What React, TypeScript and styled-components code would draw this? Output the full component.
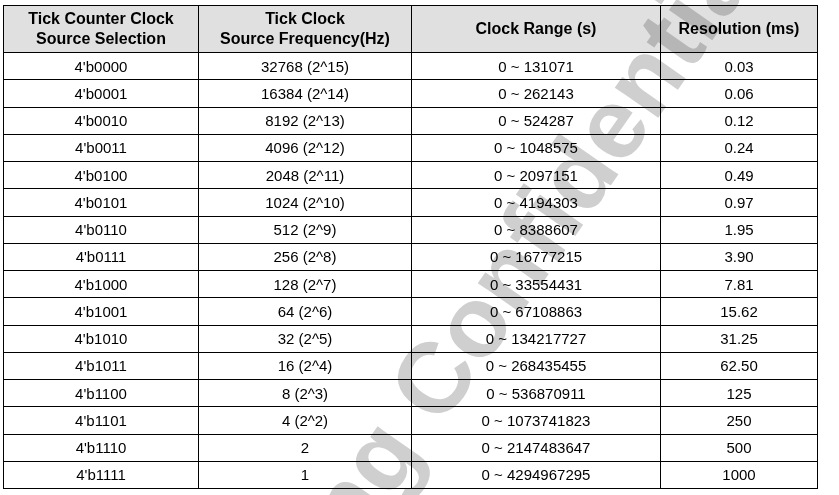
import React from 'react';
import styled, { createGlobalStyle } from 'styled-components';

const GlobalStyle = createGlobalStyle`
html, body {
margin: 0;
padding: 0;
background: #ffffff;
}
body {
font-family: "Liberation Sans", Arial, sans-serif;
color: #000000;
}
`;

const Page = styled.div`
position: relative;
width: 839px;
height: 495px;
overflow: hidden;
padding: 5px 0 0 3px;
box-sizing: border-box;
`;

const Grid = styled.div`
display: grid;
grid-template-columns: 195px 213px 249px 157px;
grid-template-rows: 47px repeat(16, 27.25px);
width: 815px;
border-top: 1px solid #000;
border-left: 1px solid #000;
box-sizing: border-box;
`;

const HeadCell = styled.div`
display: flex;
align-items: center;
justify-content: center;
text-align: center;
background: #e0e0e0;
border-right: 1px solid #000;
border-bottom: 1px solid #000;
font-size: 16px;
font-weight: 700;
line-height: 20px;
`;

const Cell = styled.div`
display: flex;
align-items: center;
justify-content: center;
border-right: 1px solid #000;
border-bottom: 1px solid #000;
font-size: 15px;
line-height: 1;
`;

const Watermark = styled.span`
position: absolute;
left: 97px;
top: 771px;
transform-origin: 0 0;
transform: rotate(-55deg);
font-family: "Liberation Sans", Arial, sans-serif;
font-weight: 700;
font-size: 100px;
line-height: 100px;
white-space: nowrap;
color: #cfcfcf;
mix-blend-mode: multiply;
pointer-events: none;
`;

interface IRow {
    sel: string;
    freq: string;
    range: string;
    res: string;
}

const rows: IRow[] = [
    { sel: "4'b0000", freq: '32768 (2^15)', range: '0 ~ 131071', res: '0.03' },
    { sel: "4'b0001", freq: '16384 (2^14)', range: '0 ~ 262143', res: '0.06' },
    { sel: "4'b0010", freq: '8192 (2^13)', range: '0 ~ 524287', res: '0.12' },
    { sel: "4'b0011", freq: '4096 (2^12)', range: '0 ~ 1048575', res: '0.24' },
    { sel: "4'b0100", freq: '2048 (2^11)', range: '0 ~ 2097151', res: '0.49' },
    { sel: "4'b0101", freq: '1024 (2^10)', range: '0 ~ 4194303', res: '0.97' },
    { sel: "4'b0110", freq: '512 (2^9)', range: '0 ~ 8388607', res: '1.95' },
    { sel: "4'b0111", freq: '256 (2^8)', range: '0 ~ 16777215', res: '3.90' },
    { sel: "4'b1000", freq: '128 (2^7)', range: '0 ~ 33554431', res: '7.81' },
    { sel: "4'b1001", freq: '64 (2^6)', range: '0 ~ 67108863', res: '15.62' },
    { sel: "4'b1010", freq: '32 (2^5)', range: '0 ~ 134217727', res: '31.25' },
    { sel: "4'b1011", freq: '16 (2^4)', range: '0 ~ 268435455', res: '62.50' },
    { sel: "4'b1100", freq: '8 (2^3)', range: '0 ~ 536870911', res: '125' },
    { sel: "4'b1101", freq: '4 (2^2)', range: '0 ~ 1073741823', res: '250' },
    { sel: "4'b1110", freq: '2', range: '0 ~ 2147483647', res: '500' },
    { sel: "4'b1111", freq: '1', range: '0 ~ 4294967295', res: '1000' },
];

const App: React.FC = () => {
    return (
        <>
            <GlobalStyle />
            <Page>
                <Grid>
                    <HeadCell>
                        Tick Counter Clock
                        <br />
                        Source Selection
                    </HeadCell>
                    <HeadCell>
                        Tick Clock
                        <br />
                        Source Frequency(Hz)
                    </HeadCell>
                    <HeadCell>Clock Range (s)</HeadCell>
                    <HeadCell>Resolution (ms)</HeadCell>
                    {rows.map((r) => (
                        <React.Fragment key={r.sel}>
                            <Cell>{r.sel}</Cell>
                            <Cell>{r.freq}</Cell>
                            <Cell>{r.range}</Cell>
                            <Cell>{r.res}</Cell>
                        </React.Fragment>
                    ))}
                </Grid>
                <Watermark>Samsung Confidential</Watermark>
            </Page>
        </>
    );
};

export default App;
